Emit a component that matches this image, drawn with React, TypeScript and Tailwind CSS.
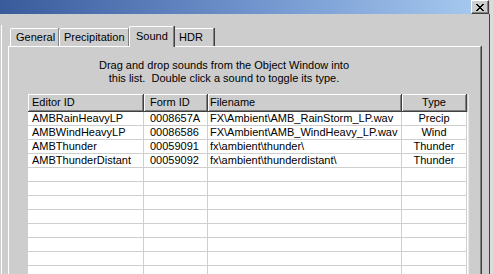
import React from "react";

const cols = [
  { w: "w-[116px]", pad: "pl-[4px]", align: "text-left" },
  { w: "w-[64px]", pad: "pl-[6px]", align: "text-left" },
  { w: "w-[194px]", pad: "pl-[2px]", align: "text-left" },
  { w: "w-[65px]", pad: "", align: "text-center" },
];

const headers = ["Editor ID", "Form ID", "Filename", "Type"];

const rows: string[][] = [
  ["AMBRainHeavyLP", "0008657A", "FX\\Ambient\\AMB_RainStorm_LP.wav", "Precip"],
  ["AMBWindHeavyLP", "00086586", "FX\\Ambient\\AMB_WindHeavy_LP.wav", "Wind"],
  ["AMBThunder", "00059091", "fx\\ambient\\thunder\\", "Thunder"],
  ["AMBThunderDistant", "00059092", "fx\\ambient\\thunderdistant\\", "Thunder"],
  ["", "", "", ""],
  ["", "", "", ""],
  ["", "", "", ""],
  ["", "", "", ""],
  ["", "", "", ""],
  ["", "", "", ""],
  ["", "", "", ""],
  ["", "", "", ""],
];

function CloseX() {
  const px: [number, number][] = [];
  const pattern = [
    "XX....XX",
    ".XX..XX.",
    "..XXXX..",
    "...XX...",
    "..XXXX..",
    ".XX..XX.",
    "XX....XX",
  ];
  pattern.forEach((r, y) =>
    r.split("").forEach((c, x) => {
      if (c === "X") px.push([x, y]);
    })
  );
  return (
    <svg width="8" height="7" viewBox="0 0 8 7" shapeRendering="crispEdges">
      {px.map(([x, y]) => (
        <rect key={`${x}-${y}`} x={x} y={y} width="1" height="1" fill="#000" />
      ))}
    </svg>
  );
}

function Tab({
  label,
  w,
  pl,
  selected,
}: {
  label: string;
  w: string;
  pl: string;
  selected?: boolean;
}) {
  if (selected) {
    return (
      <div
        className={`${w} ${pl} h-[21px] relative z-10 bg-[#cdcdcd] border-t border-l border-white rounded-tl-[2px] border-r border-r-[#808080] shadow-[1px_0_0_#404040] pt-[1px] leading-[16px]`}
      >
        {label}
      </div>
    );
  }
  return (
    <div
      className={`${w} ${pl} h-[18px] mt-[2px] bg-[#cdcdcd] border-t border-l border-white rounded-tl-[2px] border-r border-r-[#808080] shadow-[1px_0_0_#404040] leading-[17px]`}
    >
      {label}
    </div>
  );
}

export default function App() {
  return (
    <div className="w-[493px] h-[274px] overflow-hidden bg-[#dcdcdc] flex font-['Liberation_Sans',Arial,sans-serif] text-[11px] text-black">
      <div className="w-[490px] h-full flex flex-col">
        <div className="h-[3px] bg-[#d6d6d6]" />
        <div className="h-[18px] bg-gradient-to-r from-[#3a5b9b] via-[#6f92cc] to-[#a9ccf1] flex items-center justify-end pr-[1px]">
          <div className="w-[18px] h-[14px] bg-[#cdcdcd] border-t border-l border-white border-r border-b border-r-[#404040] border-b-[#404040] shadow-[inset_-1px_-1px_0_#808080] flex items-center justify-center">
            <CloseX />
          </div>
        </div>
        <div className="flex-1 bg-[#cdcdcd] border-r border-[#404040] pt-[11px] pl-[1px]">
          <div className="h-full border-l border-white pt-[1px]">
            <div className="flex ml-[8px] h-[20px]">
              <Tab label="General" w="w-[49px]" pl="pl-[5px]" />
              <Tab label="Precipitation" w="w-[70px]" pl="pl-[4px]" />
              <Tab label="Sound" w="w-[45px]" pl="pl-[6px]" selected />
              <Tab label="HDR" w="w-[40px]" pl="pl-[4px]" />
            </div>
            <div className="ml-[6px] w-[473px] h-[240px] border-t border-l border-white border-r border-r-[#808080] shadow-[1px_0_0_#404040]">
              <div className="mt-[12px] ml-[70px] w-[290px] text-center leading-[13px] whitespace-pre">
                {"Drag and drop sounds from the Object Window into\nthis list.  Double click a sound to toggle its type."}
              </div>
              <div className="mt-[9px] ml-[19px] w-[441px] border-r border-[#eaeaea] bg-white">
                <div className="flex bg-[#cdcdcd] h-[18px]">
                  {headers.map((h, i) => (
                    <div
                      key={h}
                      className={`${cols[i].w} ${cols[i].pad} ${cols[i].align} h-[18px] border-r border-b border-[#404040] shadow-[inset_1px_1px_0_#fff,inset_-1px_-1px_0_#808080] leading-[17px] whitespace-nowrap`}
                    >
                      {h}
                    </div>
                  ))}
                  <div className="flex-1" />
                </div>
                {rows.map((r, ri) => (
                  <div key={ri} className="flex h-[14px]">
                    {r.map((c, ci) => (
                      <div
                        key={ci}
                        className={`${cols[ci].w} ${cols[ci].pad} ${cols[ci].align} h-[14px] border-r border-b border-[#cfcfcf] leading-[13px] whitespace-nowrap overflow-hidden`}
                      >
                        {c}
                      </div>
                    ))}
                    <div className="flex-1" />
                  </div>
                ))}
              </div>
            </div>
          </div>
        </div>
      </div>
    </div>
  );
}
